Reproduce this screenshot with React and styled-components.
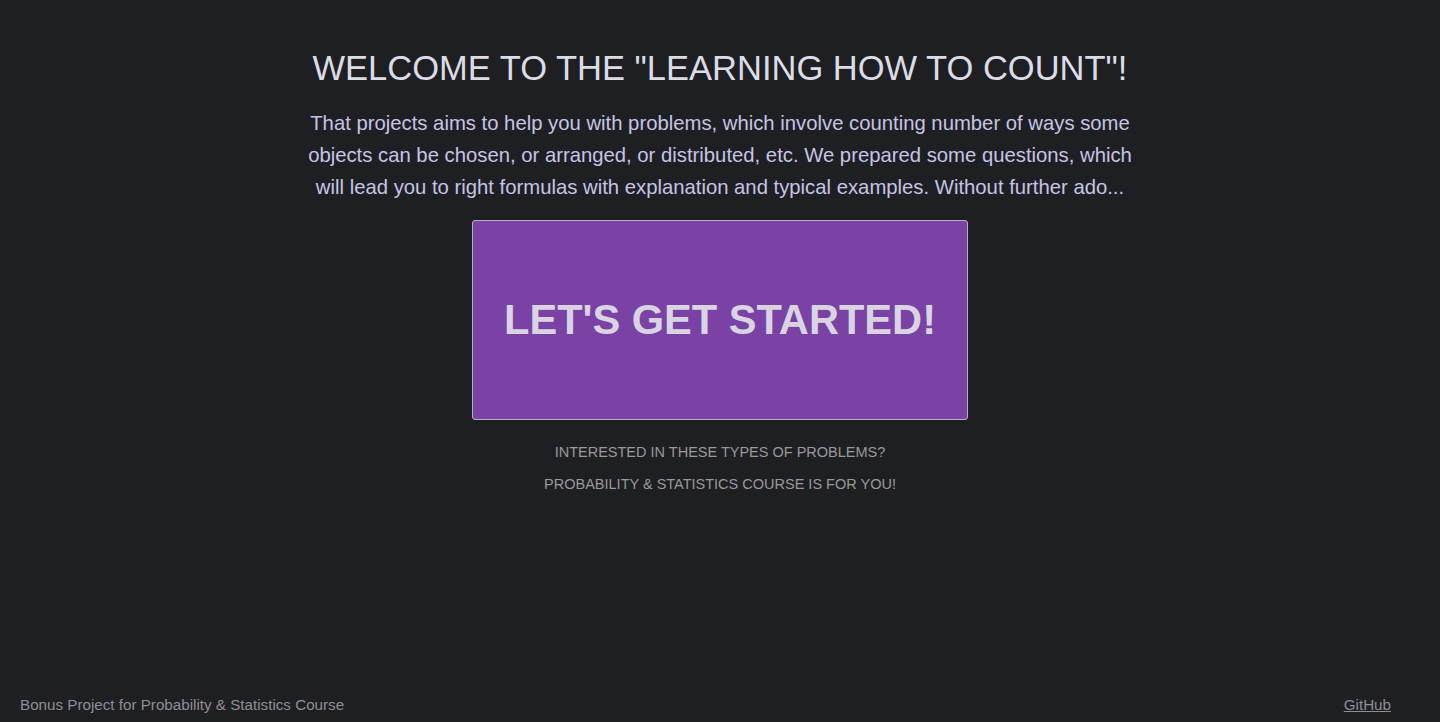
import React from 'react';
import styled, { createGlobalStyle } from 'styled-components';

const GlobalStyle = createGlobalStyle`
  html, body {
    margin: 0;
    padding: 0;
    background-color: #1e1f22;
    font-family: "Liberation Sans", Arial, sans-serif;
  }
`;

const Page = styled.div`
  min-height: 722px;
  display: flex;
  flex-direction: column;
  box-sizing: border-box;
`;

const Main = styled.main`
  flex: 1;
  display: flex;
  flex-direction: column;
  align-items: center;
  padding-top: 48px;
`;

const Title = styled.h1`
  margin: 0;
  font-size: 34.5px;
  font-weight: 400;
  line-height: 40px;
  color: #dcdce6;
`;

const Intro = styled.p`
  margin: 19px 0 0;
  width: 836px;
  text-align: center;
  font-size: 20.3px;
  line-height: 32px;
  color: #c6c4e6;
`;

const StartButton = styled.button`
  margin-top: 17px;
  width: 496px;
  height: 200px;
  background-color: #7a42a4;
  border: 1px solid #b8b2c4;
  border-radius: 3px;
  color: #d9d4e2;
  font-family: inherit;
  font-size: 41.6px;
  font-weight: 700;
  cursor: pointer;
`;

const Note = styled.p`
  margin: 0;
  font-size: 14.5px;
  line-height: 32px;
  color: #999;
  text-align: center;
  text-transform: uppercase;
`;

const Notes = styled.div`
  margin-top: 16px;
`;

const Footer = styled.footer`
  display: flex;
  justify-content: space-between;
  align-items: center;
  padding: 0 49px 2px 20px;
  height: 32px;
  font-size: 15.2px;
  color: #8e8e92;
`;

const Link = styled.a`
  color: #8e8e92;
  text-decoration: underline;
`;

const App = () => {
  return (
    <Page>
      <GlobalStyle />
      <Main>
        <Title>WELCOME TO THE "LEARNING HOW TO COUNT"!</Title>
        <Intro>
          That projects aims to help you with problems, which involve counting
          number of ways some objects can be chosen, or arranged, or
          distributed, etc. We prepared some questions, which will lead you to
          right formulas with explanation and typical examples. Without further
          ado...
        </Intro>
        <StartButton>LET'S GET STARTED!</StartButton>
        <Notes>
          <Note>Interested in these types of problems?</Note>
          <Note>Probability &amp; Statistics course is for you!</Note>
        </Notes>
      </Main>
      <Footer>
        <span>Bonus Project for Probability &amp; Statistics Course</span>
        <Link href="#">GitHub</Link>
      </Footer>
    </Page>
  );
};

export default App;
